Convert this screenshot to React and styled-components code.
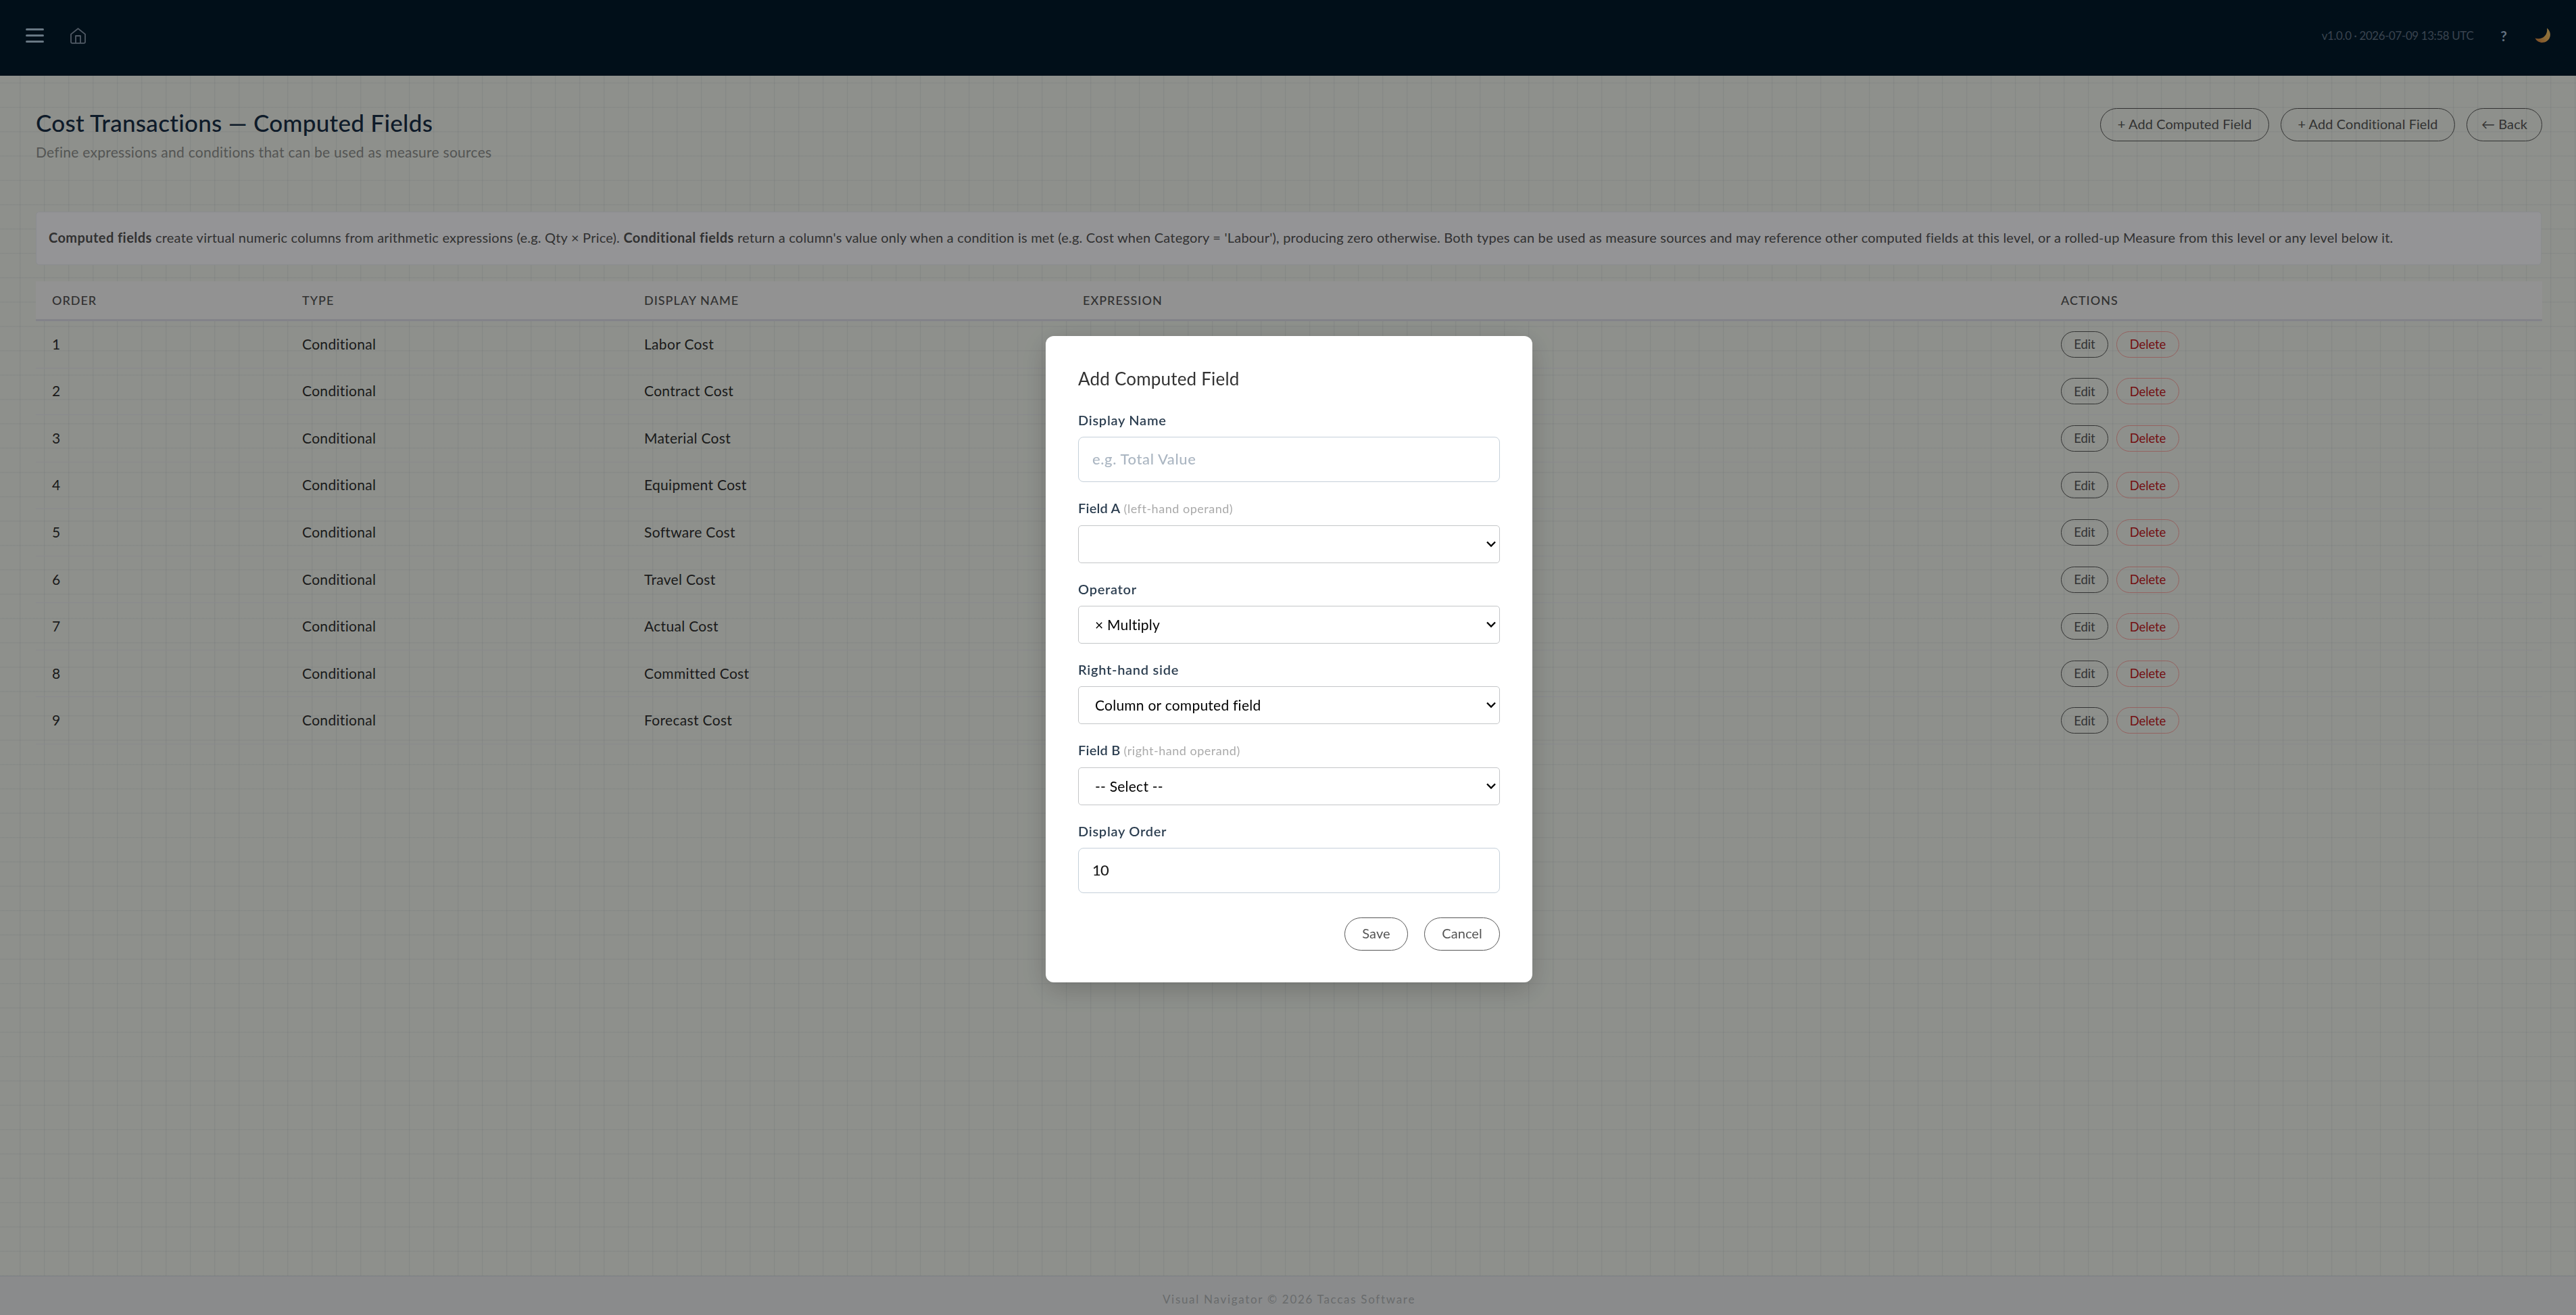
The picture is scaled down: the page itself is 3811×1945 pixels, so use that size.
import React from 'react';
import styled, { createGlobalStyle } from 'styled-components';

const GlobalStyle = createGlobalStyle`
  *, *::before, *::after { box-sizing: border-box; }
  html, body, #root { height: 100%; }
  body {
    margin: 0;
    overflow: hidden;
    font-family: Lato, "Open Sans", sans-serif;
    color: #2e2e2e;
  }
  button, input, select { font-family: inherit; }
`;

const Page = styled.div`
  display: flex;
  flex-direction: column;
  height: 100vh;
  background-color: #edf1ea;
  background-image:
    linear-gradient(to right, rgba(60, 75, 110, 0.07) 1px, rgba(60, 75, 110, 0.025) 1px, rgba(60, 75, 110, 0.025) 2px, transparent 2px),
    linear-gradient(to bottom, rgba(60, 75, 110, 0.06) 1px, rgba(60, 75, 110, 0.03) 1px, rgba(60, 75, 110, 0.03) 2px, transparent 2px);
  background-size: 36px 36px;
  background-position: 29px 14px;
`;

const TopBar = styled.header`
  display: flex;
  align-items: flex-start;
  justify-content: space-between;
  height: 112px;
  flex: none;
  padding: 40px 37px 0 38px;
  background: #03192b;
`;

const BarGroup = styled.div`
  display: flex;
  align-items: center;
  height: 25px;
`;

const Hamburger = styled.span`
  display: flex;
  flex-direction: column;
  justify-content: space-between;
  width: 27px;
  height: 21px;
  margin-right: 39px;
`;

const HamburgerLine = styled.span`
  height: 3px;
  border-radius: 1.5px;
  background: #b0c8dc;
`;

const Version = styled.span`
  font-size: 17px;
  line-height: 25px;
  letter-spacing: -0.42px;
  color: #5f7183;
  white-space: nowrap;
`;

const HelpMark = styled.span`
  margin: 0 41px 0 40px;
  font-size: 21px;
  line-height: 25px;
  font-weight: 700;
  color: #a7bed6;
`;

const Main = styled.main`
  flex: 1;
  padding: 48px 50px 0 53px;
`;

const PageHead = styled.div`
  display: flex;
  justify-content: space-between;
  align-items: flex-start;
  height: 153px;
`;

const Title = styled.h1`
  margin: 0;
  font-size: 35px;
  line-height: 42px;
  font-weight: 500;
  letter-spacing: 0.3px;
  color: #182d45;
`;

const Subtitle = styled.p`
  margin: 10px 0 0;
  font-size: 21px;
  line-height: 26px;
  letter-spacing: 0.27px;
  color: #8c8e8c;
`;

const ButtonRow = styled.div`
  display: flex;
  justify-content: flex-end;
  gap: ${(p) => p.$gap}px;
`;

const PillButton = styled.button`
  width: ${(p) => p.$width}px;
  height: 49px;
  padding: 0 0 3px;
  border: 1px solid #555;
  border-radius: 25px;
  background: transparent;
  font-size: 20px;
  line-height: 24px;
  letter-spacing: 0.08px;
  color: #555;
  white-space: nowrap;
`;

const InfoBox = styled.section`
  display: flex;
  align-items: center;
  height: 79px;
  margin-right: 1px;
  padding: 0 18px 3px;
  border: 1px solid #e7e9ee;
  border-radius: 5px;
  background: #f7f7fb;
  font-size: 20px;
  color: #525252;
`;

const InfoText = styled.p`
  margin: 0;
  line-height: 30px;
  letter-spacing: 0.215px;
  white-space: nowrap;
  strong { letter-spacing: 0.43px; }
`;

const Table = styled.div`
  margin-top: 24px;
`;

const columns = '370px 506px 649px 1447px 1fr';

const TableHead = styled.div`
  display: grid;
  grid-template-columns: ${columns};
  align-items: center;
  height: 59px;
  border-bottom: 3px solid #dadbe5;
  background: #f3f3f3;
`;

const HeadCell = styled.span`
  padding-left: 24px;
  font-size: 18px;
  line-height: 22px;
  font-weight: 500;
  letter-spacing: 1px;
  text-transform: uppercase;
  color: #525252;
`;

const Row = styled.div`
  display: grid;
  grid-template-columns: ${columns};
  align-items: center;
  height: 69.55px;
  border-bottom: 1px solid #e4e5ec;
`;

const Cell = styled.span`
  padding: 0 0 1px 24px;
  font-size: 21px;
  line-height: 26px;
  letter-spacing: 0.32px;
`;

const RowActions = styled.div`
  display: flex;
  gap: 12px;
  padding-left: 24px;
`;

const SmallButton = styled.button`
  width: ${(p) => (p.$danger ? 93 : 70)}px;
  height: 39px;
  padding: 0;
  border: 1px solid ${(p) => (p.$danger ? '#f7a3a0' : '#555')};
  border-radius: 20px;
  background: transparent;
  font-size: 18.5px;
  line-height: 22px;
  letter-spacing: -0.1px;
  color: ${(p) => (p.$danger ? '#c01a1f' : '#555')};
`;

const Footer = styled.footer`
  flex: none;
  height: 58px;
  padding: 22px 0 0 3px;
  border-top: 1px solid #d3d7de;
  background: #e6e8ea;
  text-align: center;
  font-size: 17px;
  line-height: 24px;
  letter-spacing: 1.7px;
  color: #b0b3b5;
`;

const Overlay = styled.div`
  position: fixed;
  inset: 0;
  display: flex;
  align-items: center;
  justify-content: center;
  padding: 5px 0 0 3px;
  background: rgba(0, 0, 0, 0.4);
`;

const Modal = styled.div`
  width: 720px;
  height: 956px;
  padding: 48px;
  border-radius: 12px;
  background: #fff;
  box-shadow: 0 10px 40px rgba(0, 0, 0, 0.2);
`;

const ModalTitle = styled.h2`
  margin: 0 0 33px;
  font-size: 26px;
  line-height: 31px;
  font-weight: 400;
  letter-spacing: 0.2px;
  color: #333;
`;

const Field = styled.div`
  margin-bottom: ${(p) => (p.$last ? 36 : 26)}px;
`;

const Label = styled.label`
  display: block;
  margin-bottom: 13px;
  font-size: 20px;
  line-height: 24px;
  font-weight: 600;
  letter-spacing: ${(p) => p.$track ?? 0.72}px;
  color: #2c3e50;
  white-space: nowrap;
`;

const Hint = styled.span`
  font-size: 18px;
  font-weight: 400;
  letter-spacing: 0.52px;
  color: #aaa;
`;

const Input = styled.input`
  display: block;
  width: 100%;
  height: 67px;
  padding: 0 20px 2px;
  border: 1px solid #c5d0da;
  border-radius: 8px;
  outline: none;
  background: #fff;
  font-size: 22px;
  font-weight: 500;
  letter-spacing: -0.8px;
  color: #1a1a1a;
  &::placeholder { color: #abb6c2; opacity: 1; letter-spacing: 0.62px; }
`;

const SelectBox = styled.div`
  display: grid;
  align-items: center;
  > * { grid-area: 1 / 1; }
`;

const Select = styled.select`
  appearance: none;
  width: 100%;
  height: 56px;
  padding: 0 40px 2px 24px;
  border: 1px solid #c4c6c8;
  border-radius: 5px;
  background: #fff;
  font-size: 21px;
  letter-spacing: 0.24px;
  color: #000;
`;

const Chevron = styled.svg`
  justify-self: end;
  margin-right: 6px;
  pointer-events: none;
`;

function HomeIcon() {
  return (
    <svg width="23" height="24" viewBox="0 0 23 24" fill="none" stroke="#8796a8" strokeWidth="1.8" strokeLinejoin="round">
      <path d="M1 9.6 11.5 1.200 22 9.600V21a1.800 1.800 0 0 1-1.800 1.800H2.800A1.800 1.800 0 0 1 1 21Z" />
      <path d="M8 23V12h7v11" />
    </svg>
  );
}

function MoonIcon() {
  return (
    <svg width="24" height="23" viewBox="0 0 24 23">
      <defs>
        <linearGradient id="moon" x1="0" y1="1" x2="1" y2="0">
          <stop offset="0" stopColor="#c9783c" />
          <stop offset="0.5" stopColor="#efb45a" />
          <stop offset="1" stopColor="#efc66c" />
        </linearGradient>
      </defs>
      <path d="M18 .5c4.400 3.500 6.200 9.300 4 14.300C18.500 23.500 5.500 25 .5 15.500c5 1.500 10.500.7 14-3C18 9 18.600 4.500 18 .5Z" fill="url(#moon)" />
    </svg>
  );
}

const headings = ['Order', 'Type', 'Display Name', 'Expression', 'Actions'];
const fields = [
  'Labor Cost',
  'Contract Cost',
  'Material Cost',
  'Equipment Cost',
  'Software Cost',
  'Travel Cost',
  'Actual Cost',
  'Committed Cost',
  'Forecast Cost',
];

function SelectField({ label, hint, value }) {
  return (
    <Field>
      <Label $track={hint ? 0.2 : undefined}>
        {label}
        {hint && <Hint> ({hint})</Hint>}
      </Label>
      <SelectBox>
        <Select defaultValue={value}>
          <option value={value}>{value}</option>
        </Select>
        <Chevron width="14" height="10" viewBox="0 0 14 10" fill="none" stroke="#000" strokeWidth="2.3">
          <path d="M1 1.500 7 7.500l6-6" />
        </Chevron>
      </SelectBox>
    </Field>
  );
}

export default function App() {
  return (
    <>
      <GlobalStyle />
      <Page>
        <TopBar>
          <BarGroup>
            <Hamburger>
              <HamburgerLine />
              <HamburgerLine />
              <HamburgerLine />
            </Hamburger>
            <HomeIcon />
          </BarGroup>
          <BarGroup>
            <Version>v1.0.0 · 2026-07-09 13:58 UTC</Version>
            <HelpMark>?</HelpMark>
            <MoonIcon />
          </BarGroup>
        </TopBar>
        <Main>
          <PageHead>
            <div>
              <Title>Cost Transactions — Computed Fields</Title>
              <Subtitle>Define expressions and conditions that can be used as measure sources</Subtitle>
            </div>
            <ButtonRow $gap={17}>
              <PillButton $width={250}>+ Add Computed Field</PillButton>
              <PillButton $width={258}>+ Add Conditional Field</PillButton>
              <PillButton $width={112}>← Back</PillButton>
            </ButtonRow>
          </PageHead>
          <InfoBox>
            <InfoText>
              <strong>Computed fields</strong> create virtual numeric columns from arithmetic expressions (e.g. Qty × Price).{' '}
              <strong>Conditional fields</strong> return a column's value only when a condition is met (e.g. Cost when Category = 'Labour'), producing zero otherwise. Both types can be used as measure sources and may reference other computed fields at this level, or a rolled-up Measure from this level or any level below it.
            </InfoText>
          </InfoBox>
          <Table>
            <TableHead>
              {headings.map((h) => (
                <HeadCell key={h}>{h}</HeadCell>
              ))}
            </TableHead>
            {fields.map((name, i) => (
              <Row key={name}>
                <Cell>{i + 1}</Cell>
                <Cell>Conditional</Cell>
                <Cell>{name}</Cell>
                <Cell />
                <RowActions>
                  <SmallButton>Edit</SmallButton>
                  <SmallButton $danger>Delete</SmallButton>
                </RowActions>
              </Row>
            ))}
          </Table>
        </Main>
        <Footer>Visual Navigator © 2026 Taccas Software</Footer>
      </Page>
      <Overlay>
        <Modal>
          <ModalTitle>Add Computed Field</ModalTitle>
          <Field>
            <Label>Display Name</Label>
            <Input placeholder="e.g. Total Value" />
          </Field>
          <SelectField label="Field A" hint="left-hand operand" value="" />
          <SelectField label="Operator" value="× Multiply" />
          <SelectField label="Right-hand side" value="Column or computed field" />
          <SelectField label="Field B" hint="right-hand operand" value="-- Select --" />
          <Field $last>
            <Label>Display Order</Label>
            <Input defaultValue="10" />
          </Field>
          <ButtonRow $gap={24}>
            <PillButton $width={94}>Save</PillButton>
            <PillButton $width={112}>Cancel</PillButton>
          </ButtonRow>
        </Modal>
      </Overlay>
    </>
  );
}
